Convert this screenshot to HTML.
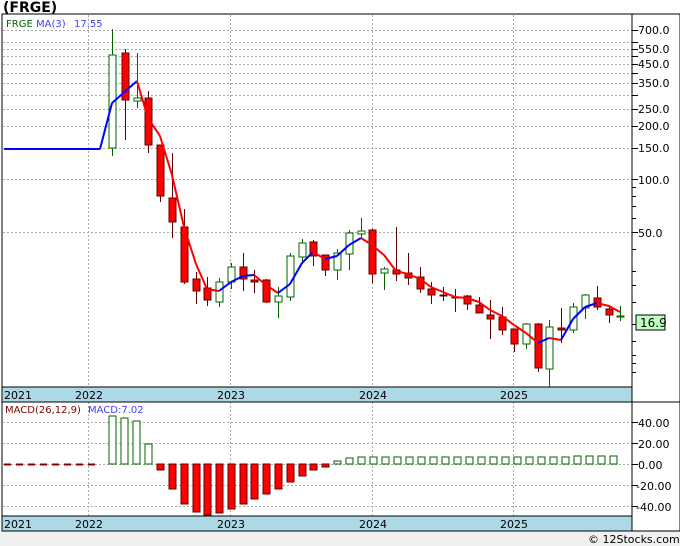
<!DOCTYPE html>
<html><head><meta charset="utf-8"><style>
html,body{margin:0;padding:0;background:#fff;width:680px;height:546px;overflow:hidden}
svg{display:block}
text{font-family:"DejaVu Sans","Liberation Sans",sans-serif;font-size:11px}
</style></head><body>
<svg id="s" width="680" height="546" xmlns="http://www.w3.org/2000/svg">
<rect x="0" y="0" width="680" height="546" fill="#fff"/>
<rect x="0" y="531" width="680" height="15" fill="#f0f0f0"/>
<text x="3" y="12" style="font-weight:bold;font-size:14px" fill="#000">(FRGE)</text>
<g id="grid" stroke="#aaa" stroke-dasharray="2,2" stroke-width="1"></g>
<rect x="2" y="387" width="630" height="15" fill="#add8e6" stroke="#000"/>
<rect x="2" y="516" width="630" height="15" fill="#add8e6" stroke="#000"/>
<g id="c"></g>
<rect x="2" y="14" width="678" height="517" fill="none" stroke="#000"/>
<line x1="632" y1="14" x2="632" y2="531" stroke="#000"/>
<line x1="632" y1="402" x2="680" y2="402" stroke="#000"/>
<line x1="2" y1="402" x2="632" y2="402" stroke="#000"/>
<g id="ticks" stroke="#000"></g>
<text x="6" y="27" fill="#006400" style="font-size:10px">FRGE</text>
<text x="36" y="27" fill="#4040ff" style="font-size:10px">MA(3)</text>
<text x="74" y="27" fill="#4040ff" style="font-size:10px">17.55</text>
<text x="5" y="413" fill="#800000" style="font-size:10px">MACD(26,12,9)</text>
<text x="88" y="413" fill="#4040ff" style="font-size:10px">MACD:7.02</text>
<g fill="#000" style="font-size:11px">
<text x="4" y="399">2021</text><text x="75" y="399">2022</text><text x="217" y="399">2023</text><text x="359" y="399">2024</text><text x="500" y="399">2025</text>
<text x="4" y="528">2021</text><text x="75" y="528">2022</text><text x="217" y="528">2023</text><text x="359" y="528">2024</text><text x="500" y="528">2025</text>
</g>
<g fill="#000" style="font-size:12px">
<text x="638" y="34">700.0</text><text x="638" y="53">550.0</text><text x="638" y="68">450.0</text><text x="638" y="87">350.0</text>
<text x="638" y="113">250.0</text><text x="638" y="130">200.0</text><text x="638" y="152">150.0</text><text x="638" y="184">100.0</text>
<text x="638" y="237">50.0</text>
<text x="638" y="427">40.00</text><text x="638" y="448">20.00</text><text x="638" y="469">0.00</text><text x="636" y="490">-20.00</text><text x="636" y="511">-40.00</text>
</g>
<rect x="636" y="315" width="29" height="15" fill="#c0ffc0" stroke="#000"/>
<text x="640" y="327" fill="#000" style="font-size:12px">16.9</text>
<text x="588" y="543" fill="#000" style="font-size:11px">© 12Stocks.com</text>
</svg>
<script>
var NS="http://www.w3.org/2000/svg",g=document.getElementById('grid'),c=document.getElementById('c'),tk=document.getElementById('ticks');
function el(p,t,a){var e=document.createElementNS(NS,t);for(var k in a)e.setAttribute(k,a[k]);p.appendChild(e);return e;}
function Y(p){return 179-76.5*Math.log(p/100);}
[700,600,550,500,450,400,350,300,250,200,150,100,50].forEach(function(p){var y=Math.round(Y(p))+.5;el(g,'line',{x1:3,x2:632,y1:y,y2:y});});
[90,80,70,60,40,30,25,20,15,12,10,9,8].forEach(function(p){var y=Math.round(Y(p))+.5;if(y<387)el(tk,'line',{x1:632,x2:636,y1:y,y2:y});});
[700,600,550,500,450,400,350,300,250,200,150,100,50].forEach(function(p){var y=Math.round(Y(p))+.5;el(tk,'line',{x1:632,x2:638,y1:y,y2:y});});
[422,443,464,485,506].forEach(function(y){y+=.5;el(g,'line',{x1:3,x2:632,y1:y,y2:y});el(tk,'line',{x1:632,x2:638,y1:y,y2:y});});
[88,230,372,513].forEach(function(x){x+=.5;el(g,'line',{x1:x,x2:x,y1:15,y2:387});el(g,'line',{x1:x,x2:x,y1:402,y2:516});});
var C=[[112,55,148,29,156,1],[125,53,100,49,140,0],[137,98,101,53,108,1],[148,98,145,91,153,0],[160,145,196,145,202,0],[172,198,222,153,238,0],[184,227,282,209,284,0],[196,279,291,272,304,0],[207,288,300,277,306,0],[219,282,302,278,307,1],[231,267,282,263,289,1],[243,267,279,253,291,0],[254,280,282,270,293,0],[266,280,302,279,303,0],[278,296,302,287,318,1],[290,256,297,253,301,1],[302,243,257,239,264,1],[313,242,256,240,266,0],[325,255,270,255,276,0],[337,253,270,249,280,1],[349,233,254,230,270,1],[361,231,234,218,238,1],[372,230,274,229,283,0],[384,269,273,267,290,1],[396,270,274,227,281,0],[408,273,278,253,285,0],[420,277,289,267,293,0],[431,289,295,282,304,0],[443,295,296,287,301,0],[455,297,298,289,312,0],[467,296,304,295,310,0],[479,305,313,297,313,0],[490,315,319,300,339,0],[502,317,330,307,335,0],[514,329,344,333,352,0],[526,324,344,323,349,1],[538,324,368,323,372,0],[549,327,369,320,387,1],[561,328,330,308,343,0],[573,307,330,303,333,1],[585,295,308,294,319,1],[597,298,307,286,310,0],[609,309,315,305,323,0],[620,316,317,306,321,1]];
C.forEach(function(d){var col=d[5]?'#006400':'#600000';el(c,'line',{x1:d[0]+.5,x2:d[0]+.5,y1:d[3],y2:d[4],stroke:col});
el(c,'rect',{x:d[0]-3,y:d[1],width:7,height:Math.max(1,d[2]-d[1]),fill:d[5]?'#fff':'#f00',stroke:col});});
var M=[[4,149],[100,149],[112,103],[137,81],[148,118],[160,136],[172,175],[184,227],[196,264],[207,289],[219,291],[231,282],[243,276],[254,275],[266,285],[278,293],[290,284],[302,263],[313,252],[325,259],[337,256],[349,245],[361,238],[372,245],[384,255],[396,271],[408,274],[420,279],[431,287],[443,292],[455,297],[467,298],[479,302],[490,310],[502,316],[514,325],[526,333],[538,343],[549,338],[561,340],[573,319],[585,307],[597,303],[609,306],[620,312]];
for(var i=1;i<M.length;i++){var a=M[i-1],b=M[i];el(c,'line',{x1:a[0],y1:a[1],x2:b[0],y2:b[1],stroke:b[1]<=a[1]?'#0000ff':'#ff0000','stroke-width':2});}
for(var x=4;x<100;x+=12)el(c,'line',{x1:x,x2:x+7,y1:464.5,y2:464.5,stroke:'#800000','stroke-width':2});
var B=[[112,416],[124,418],[136,421],[148,444],[160,470],[172,489],[184,504],[196,512],[207,515],[219,513],[231,509],[243,504],[254,499],[266,494],[278,489],[290,482],[302,476],[313,470],[325,467],[337,461],[349,458]];
for(var x=361;x<=620;x+=12)B.push([x,x>570?456:457]);
B.forEach(function(d){var g2=d[1]<464;el(c,'rect',{x:d[0]-3,y:Math.min(d[1],464),width:7,height:Math.abs(d[1]-464),fill:g2?'#fff':'#f00',stroke:g2?'#006400':'#600000'});});
</script>
</body></html>
